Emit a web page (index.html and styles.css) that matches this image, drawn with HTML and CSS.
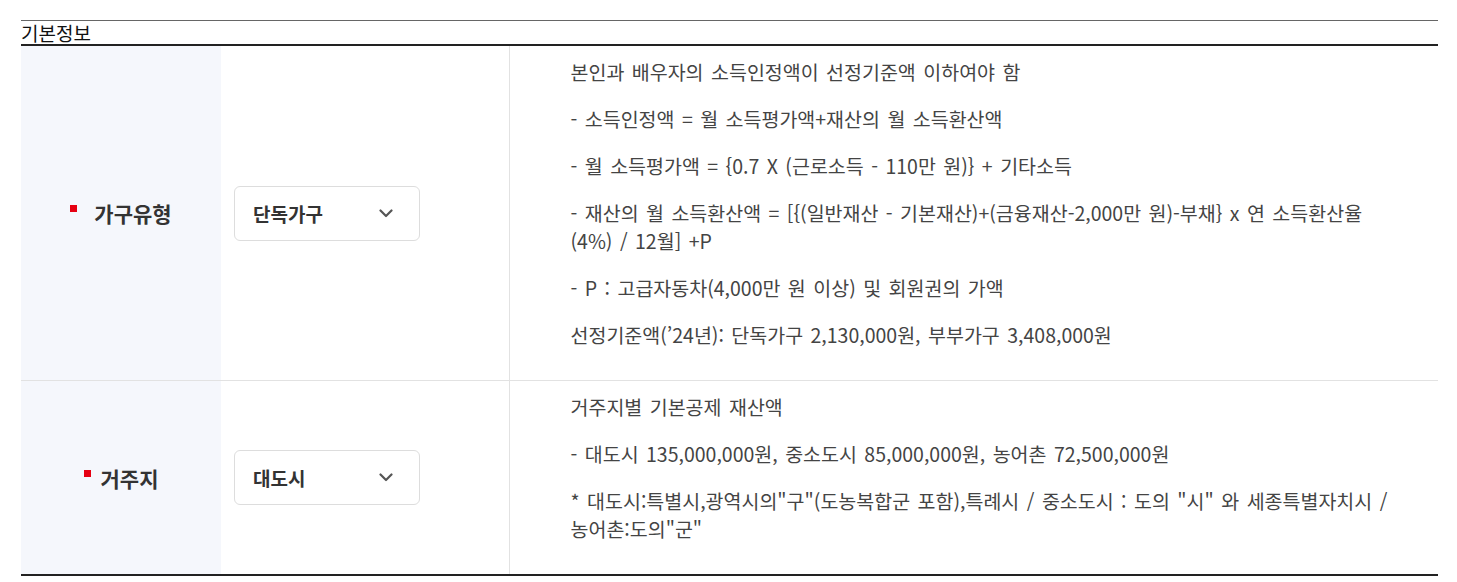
FILE: index.html
```html
<!DOCTYPE html>
<html lang="ko">
<head>
<meta charset="utf-8">
<title>기본정보</title>
<link rel="stylesheet" href="styles.css">
</head>
<body>
<section class="info">
  <h2 class="info-title">기본정보</h2>
  <table class="info-table">
    <colgroup>
      <col class="col-label">
      <col class="col-select">
      <col class="col-desc">
    </colgroup>
    <tbody>
      <tr class="row-first">
        <th class="label"><span class="marker marker-wide"></span>가구유형</th>
        <td class="select-cell">
          <div class="select">
            <span class="select-value">단독가구</span>
            <svg class="chevron" width="14" height="9" viewBox="0 0 14 9"><path d="M1.5 1.5 L7 7 L12.5 1.5" fill="none" stroke="#555" stroke-width="2.2" stroke-linecap="round" stroke-linejoin="round"/></svg>
          </div>
        </td>
        <td class="desc">
          <p>본인과 배우자의 소득인정액이 선정기준액 이하여야 함</p>
          <p>- 소득인정액 = 월 소득평가액+재산의 월 소득환산액</p>
          <p>- 월 소득평가액 = {0.7 X (근로소득 - 110만 원)} + 기타소득</p>
          <p>- 재산의 월 소득환산액 = [{(일반재산 - 기본재산)+(금융재산-2,000만 원)-부채} x 연 소득환산율<br>(4%) / 12월] +P</p>
          <p>- P : 고급자동차(4,000만 원 이상) 및 회원권의 가액</p>
          <p>선정기준액(’24년): 단독가구 2,130,000원, 부부가구 3,408,000원</p>
        </td>
      </tr>
      <tr class="row-last">
        <th class="label"><span class="marker"></span>거주지</th>
        <td class="select-cell">
          <div class="select">
            <span class="select-value">대도시</span>
            <svg class="chevron" width="14" height="9" viewBox="0 0 14 9"><path d="M1.5 1.5 L7 7 L12.5 1.5" fill="none" stroke="#555" stroke-width="2.2" stroke-linecap="round" stroke-linejoin="round"/></svg>
          </div>
        </td>
        <td class="desc">
          <p>거주지별 기본공제 재산액</p>
          <p>- 대도시 135,000,000원, 중소도시 85,000,000원, 농어촌 72,500,000원</p>
          <p>* 대도시:특별시,광역시의"구"(도농복합군 포함),특례시 / 중소도시 : 도의 "시" 와 세종특별자치시 /<br>농어촌:도의"군"</p>
        </td>
      </tr>
    </tbody>
  </table>
</section>
</body>
</html>
```
FILE: styles.css
```css
html, body {
  margin: 0;
  padding: 0;
  background: #fff;
}

body {
  font-family: "Noto Sans CJK KR", "Noto Sans", sans-serif;
  color: #444;
}

.info {
  margin: 20px 19px 0 21px;
  border-top: 1px solid #666;
}

.info-title {
  margin: 0;
  font-size: 19px;
  font-weight: 400;
  line-height: 23px;
  color: #111;
  border-bottom: 2px solid #222;
  height: 23px;
}

.info-table {
  width: 100%;
  border-collapse: collapse;
  table-layout: fixed;
  border-bottom: 2px solid #222;
}

.col-label { width: 200px; }
.col-select { width: 288px; }

.row-first {
  border-bottom: 1px solid #e2e2e2;
}

.label {
  background: #f5f7fc;
  font-size: 21px;
  font-weight: 700;
  color: #333;
  text-align: center;
  vertical-align: middle;
  padding: 0;
}

.marker {
  display: inline-block;
  width: 7px;
  height: 7px;
  background: #e60012;
  margin-right: 10px;
  vertical-align: 10px;
}

.marker-wide {
  margin-right: 17px;
}

.select-cell {
  vertical-align: middle;
  padding: 0 0 0 13px;
  border-right: 1px solid #e2e2e2;
}

.select {
  width: 186px;
  height: 55px;
  box-sizing: border-box;
  border: 1px solid #ddd;
  border-radius: 6px;
  display: flex;
  align-items: center;
  justify-content: space-between;
  padding: 0 26px 0 18px;
  background: #fff;
}

.select-value {
  font-size: 19px;
  font-weight: 700;
  color: #333;
  line-height: 1;
}

.chevron {
  display: block;
}

.desc {
  padding: 12px 20px 12px 61px;
  vertical-align: top;
  font-size: 19.5px;
  line-height: 28px;
  word-spacing: 2px;
  color: #444;
}

.desc p {
  margin: 0 0 19px;
}
```
